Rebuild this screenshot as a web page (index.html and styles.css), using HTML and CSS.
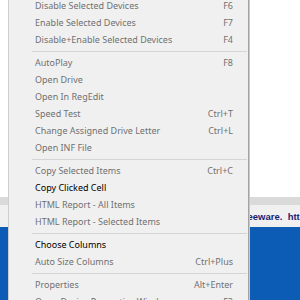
FILE: index.html
```html
<!DOCTYPE html>
<html>
<head>
<meta charset="utf-8">
<link rel="stylesheet" href="styles.css">
</head>
<body>
<div class="window">
  <div class="list-area"></div>
  <div class="hscroll"></div>
  <div class="status">
    <div class="status-left"><span>12 Item(s)</span></div>
    <div class="status-right">Freeware.  http://www.nirsoft.net</div>
  </div>
  <div class="desktop"></div>
</div>
<div class="menu">
  <div class="item"><span>Disable Selected Devices</span><span class="key">F6</span></div>
  <div class="item"><span>Enable Selected Devices</span><span class="key">F7</span></div>
  <div class="item"><span>Disable+Enable Selected Devices</span><span class="key">F4</span></div>
  <div class="sep"></div>
  <div class="item"><span>AutoPlay</span><span class="key">F8</span></div>
  <div class="item"><span>Open Drive</span></div>
  <div class="item"><span>Open In RegEdit</span></div>
  <div class="item"><span>Speed Test</span><span class="key">Ctrl+T</span></div>
  <div class="item"><span>Change Assigned Drive Letter</span><span class="key">Ctrl+L</span></div>
  <div class="item"><span>Open INF File</span></div>
  <div class="sep"></div>
  <div class="item"><span>Copy Selected Items</span><span class="key">Ctrl+C</span></div>
  <div class="item enabled"><span>Copy Clicked Cell</span></div>
  <div class="item"><span>HTML Report - All Items</span></div>
  <div class="item"><span>HTML Report - Selected Items</span></div>
  <div class="sep"></div>
  <div class="item enabled"><span>Choose Columns</span></div>
  <div class="item"><span>Auto Size Columns</span><span class="key">Ctrl+Plus</span></div>
  <div class="sep"></div>
  <div class="item"><span>Properties</span><span class="key">Alt+Enter</span></div>
  <div class="item"><span>Open Device Properties Window</span><span class="key">F2</span></div>
</div>
</body>
</html>
```
FILE: styles.css
```css
html, body {
  margin: 0;
  padding: 0;
  width: 300px;
  height: 300px;
  overflow: hidden;
  background: #ffffff;
}

.window {
  display: flex;
  flex-direction: column;
  height: 300px;
}

.list-area {
  height: 197px;
  background: #ffffff;
}

.hscroll {
  height: 8px;
  background: #dadada;
}

.status {
  display: flex;
  align-items: center;
  height: 22px;
  background: #f0f0f0;
  font-family: "Liberation Sans", Arial, sans-serif;
  font-size: 9.5px;
  white-space: nowrap;
}

.status-left {
  width: 8px;
  overflow: hidden;
  display: flex;
  justify-content: flex-end;
  color: #111111;
  font-size: 10px;
}

.status-right {
  margin-left: 238px;
  white-space: pre;
  font-weight: bold;
  color: #1c1c72;
}

.desktop {
  flex: 1;
  background: #0c5bb5;
}

.menu {
  position: absolute;
  left: 8px;
  top: -3px;
  width: 241px;
  box-sizing: border-box;
  background: #f0f0f0;
  border-left: 1px solid #cdcdcd;
  border-right: 1px solid #a3a3a3;
  box-shadow: 1px 0 0 #c9c9c9;
  font-family: "Noto Sans", "Open Sans", sans-serif;
  font-size: 9px;
  color: #707070;
}

.item {
  display: flex;
  justify-content: space-between;
  align-items: center;
  height: 17px;
  line-height: 17px;
  padding-left: 26px;
  padding-right: 15px;
  white-space: nowrap;
}

.item.enabled {
  color: #000000;
}

.key {
  text-align: right;
}

.sep {
  height: 1px;
  margin: 3px 1px 2px 23px;
  background: #d5d5d5;
}
```
